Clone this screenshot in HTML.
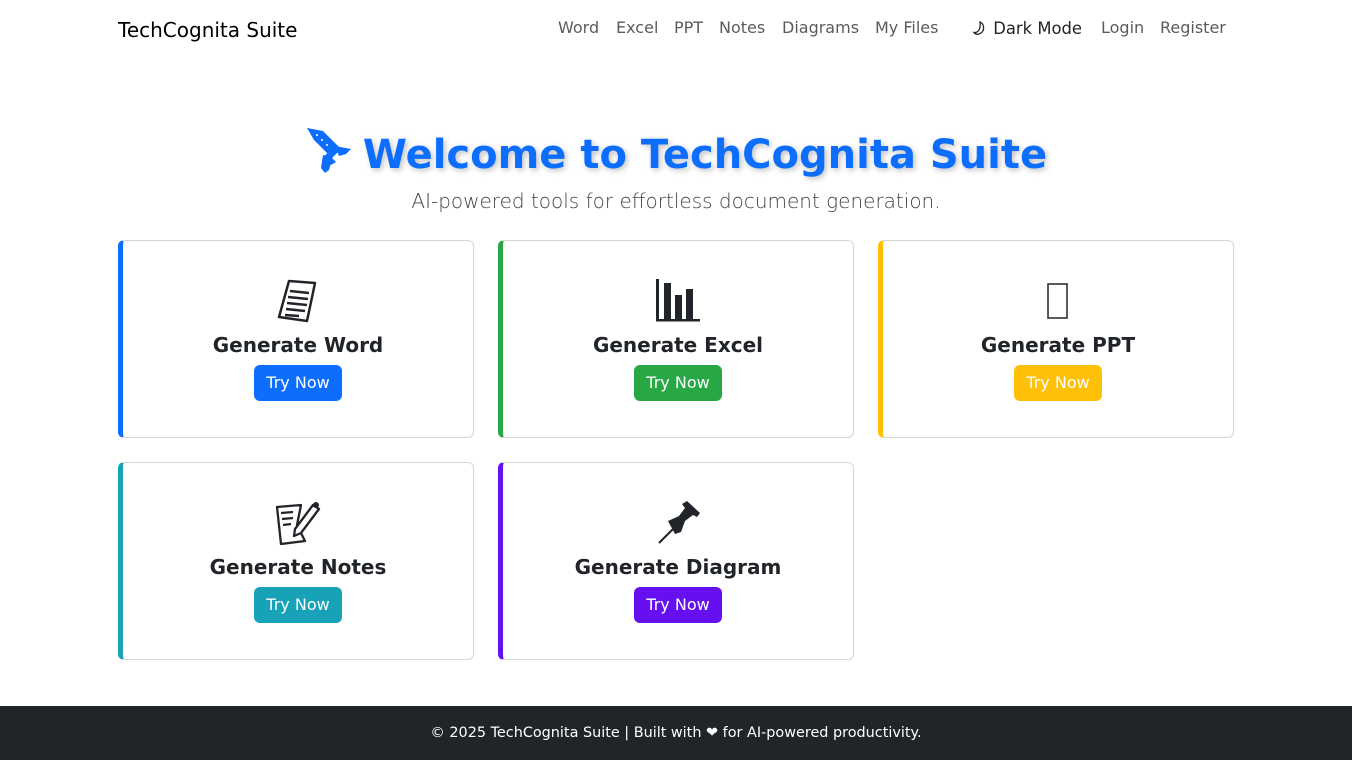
<!DOCTYPE html>
<html><head><meta charset="utf-8">
<style>
*{box-sizing:border-box;margin:0;padding:0}
body{width:1352px;height:760px;font-family:"DejaVu Sans","Liberation Sans",sans-serif;color:#212529;background:#fff;position:relative;overflow:hidden}
.brand{position:absolute;left:118px;top:18px;font-size:20px;color:#000}
.nav{position:absolute;top:18px;font-size:16px;color:rgba(0,0,0,.65)}
.nav span{position:absolute;white-space:nowrap}
h1{position:absolute;left:0;width:1352px;top:126px;text-align:center;font-size:40px;font-weight:bold;color:#0d6efd;text-shadow:2px 2px 6px rgba(0,0,0,.25)}
h1 svg{vertical-align:-6px;margin-right:10px}
.sub{position:absolute;left:0;width:1352px;top:189px;text-align:center;font-size:20px;font-weight:300;color:#444}
.card{position:absolute;width:356px;height:198px;border:1px solid #d5d5d5;border-radius:6px;text-align:center}
.ic{position:absolute;left:0;right:0;top:36px;height:48px}
.ic svg{display:block;margin:0 auto}
.t{position:absolute;left:0;right:0;top:92px;font-size:20px;font-weight:bold}
.b{position:absolute;left:50%;transform:translateX(-50%);top:124px;width:88px;height:36px;border-radius:6px;color:#fff;font-size:16px;line-height:36px}
footer{position:absolute;left:0;top:706px;width:1352px;height:54px;background:#212529;color:#fff;font-size:14.4px;text-align:center;line-height:54px}
</style></head><body>
<div class="brand">TechCognita Suite</div>
<div class="nav">
<span style="left:558px">Word</span><span style="left:616px">Excel</span><span style="left:674px">PPT</span><span style="left:719px">Notes</span><span style="left:782px">Diagrams</span><span style="left:875px">My Files</span>
<span style="left:972px;top:1px;color:#212529;font-size:16.4px"><svg width="16" height="16" viewBox="0 0 16 16" style="vertical-align:-2px"><path d="M8 2 C13 4 13 12 7 14 C5 14.5 3 14 2 12.5 C6 13 9 9 8 2Z" fill="none" stroke="#212529" stroke-width="1.3"/></svg> Dark Mode</span>
<span style="left:1101px">Login</span><span style="left:1160px">Register</span>
</div>
<h1><svg width="48" height="48" viewBox="0 0 48 48"><g fill="#0d6efd"><path d="M2 2 L18 5 L36 23 L27 32 L9 14 Z"/><path d="M30 20 L46 23 L41 28 L34 30 Z"/><path d="M18 29 L28 30 L24 44 L20 47 L16 42 Z"/><path d="M22 27 L31 36 L26 39 L19 32Z"/></g><g fill="#fff"><circle cx="12" cy="9" r="1"/><circle cx="17" cy="14" r="1"/><circle cx="22" cy="19" r="1"/></g></svg>Welcome to TechCognita Suite</h1>
<div class="sub">AI-powered tools for effortless document generation.</div>

<div class="card" style="left:118px;top:240px;border-left:5px solid #0d6efd"><div class="ic"><svg width="46" height="46" viewBox="0 0 46 46"><path d="M14 4 L40 6 L32 44 L4 40 Z" fill="none" stroke="#212529" stroke-width="2.5" stroke-linejoin="round"/><g stroke="#212529" stroke-width="2.5"><line x1="15" y1="14" x2="34" y2="16"/><line x1="13" y1="20" x2="33" y2="22"/><line x1="12" y1="26" x2="32" y2="28"/><line x1="11" y1="32" x2="30" y2="34"/><line x1="10" y1="38" x2="24" y2="39"/></g></svg></div><div class="t">Generate Word</div><div class="b" style="background:#0d6efd">Try Now</div></div>
<div class="card" style="left:498px;top:240px;border-left:5px solid #28a745"><div class="ic"><svg width="46" height="46" viewBox="0 0 46 46"><g fill="#212529"><rect x="1" y="2" width="3" height="42"/><rect x="1" y="42" width="44" height="2.5"/><rect x="9" y="6" width="7" height="36"/><rect x="20" y="18" width="7" height="24"/><rect x="31" y="12" width="7" height="30"/></g></svg></div><div class="t">Generate Excel</div><div class="b" style="background:#28a745">Try Now</div></div>
<div class="card" style="left:878px;top:240px;border-left:5px solid #ffc107"><div class="ic"><svg width="24" height="46" viewBox="0 0 24 46"><rect x="2" y="7" width="19" height="34" fill="none" stroke="#212529" stroke-width="1.5"/></svg></div><div class="t">Generate PPT</div><div class="b" style="background:#ffc107">Try Now</div></div>
<div class="card" style="left:118px;top:462px;border-left:5px solid #17a2b8"><div class="ic"><svg width="46" height="46" viewBox="0 0 46 46"><path d="M2 8 L26 6 L22 26 L30 42 L6 45 Z" fill="none" stroke="#212529" stroke-width="2.3" stroke-linejoin="round"/><g stroke="#212529" stroke-width="2.3"><line x1="6" y1="14" x2="18" y2="13"/><line x1="7" y1="20" x2="18" y2="19"/><line x1="8" y1="26" x2="16" y2="25"/></g><path d="M20 30 L38 6 L44 10 L26 34 L19 37 Z" fill="#fff" stroke="#212529" stroke-width="2.3" stroke-linejoin="round"/><circle cx="41" cy="6" r="3" fill="#212529"/></svg></div><div class="t">Generate Notes</div><div class="b" style="background:#17a2b8">Try Now</div></div>
<div class="card" style="left:498px;top:462px;border-left:5px solid #6610f2"><div class="ic"><svg width="46" height="46" viewBox="0 0 46 46"><line x1="4" y1="44" x2="20" y2="28" stroke="#212529" stroke-width="2"/><path d="M13 22 L24 17 L30 9 L27 5 L32 2 L45 14 L42 18 L38 16 L30 22 L26 33 L20 35 Z" fill="#212529"/></svg></div><div class="t">Generate Diagram</div><div class="b" style="background:#6610f2">Try Now</div></div>

<footer>© 2025 TechCognita Suite | Built with ❤ for AI-powered productivity.</footer>
</body></html>
